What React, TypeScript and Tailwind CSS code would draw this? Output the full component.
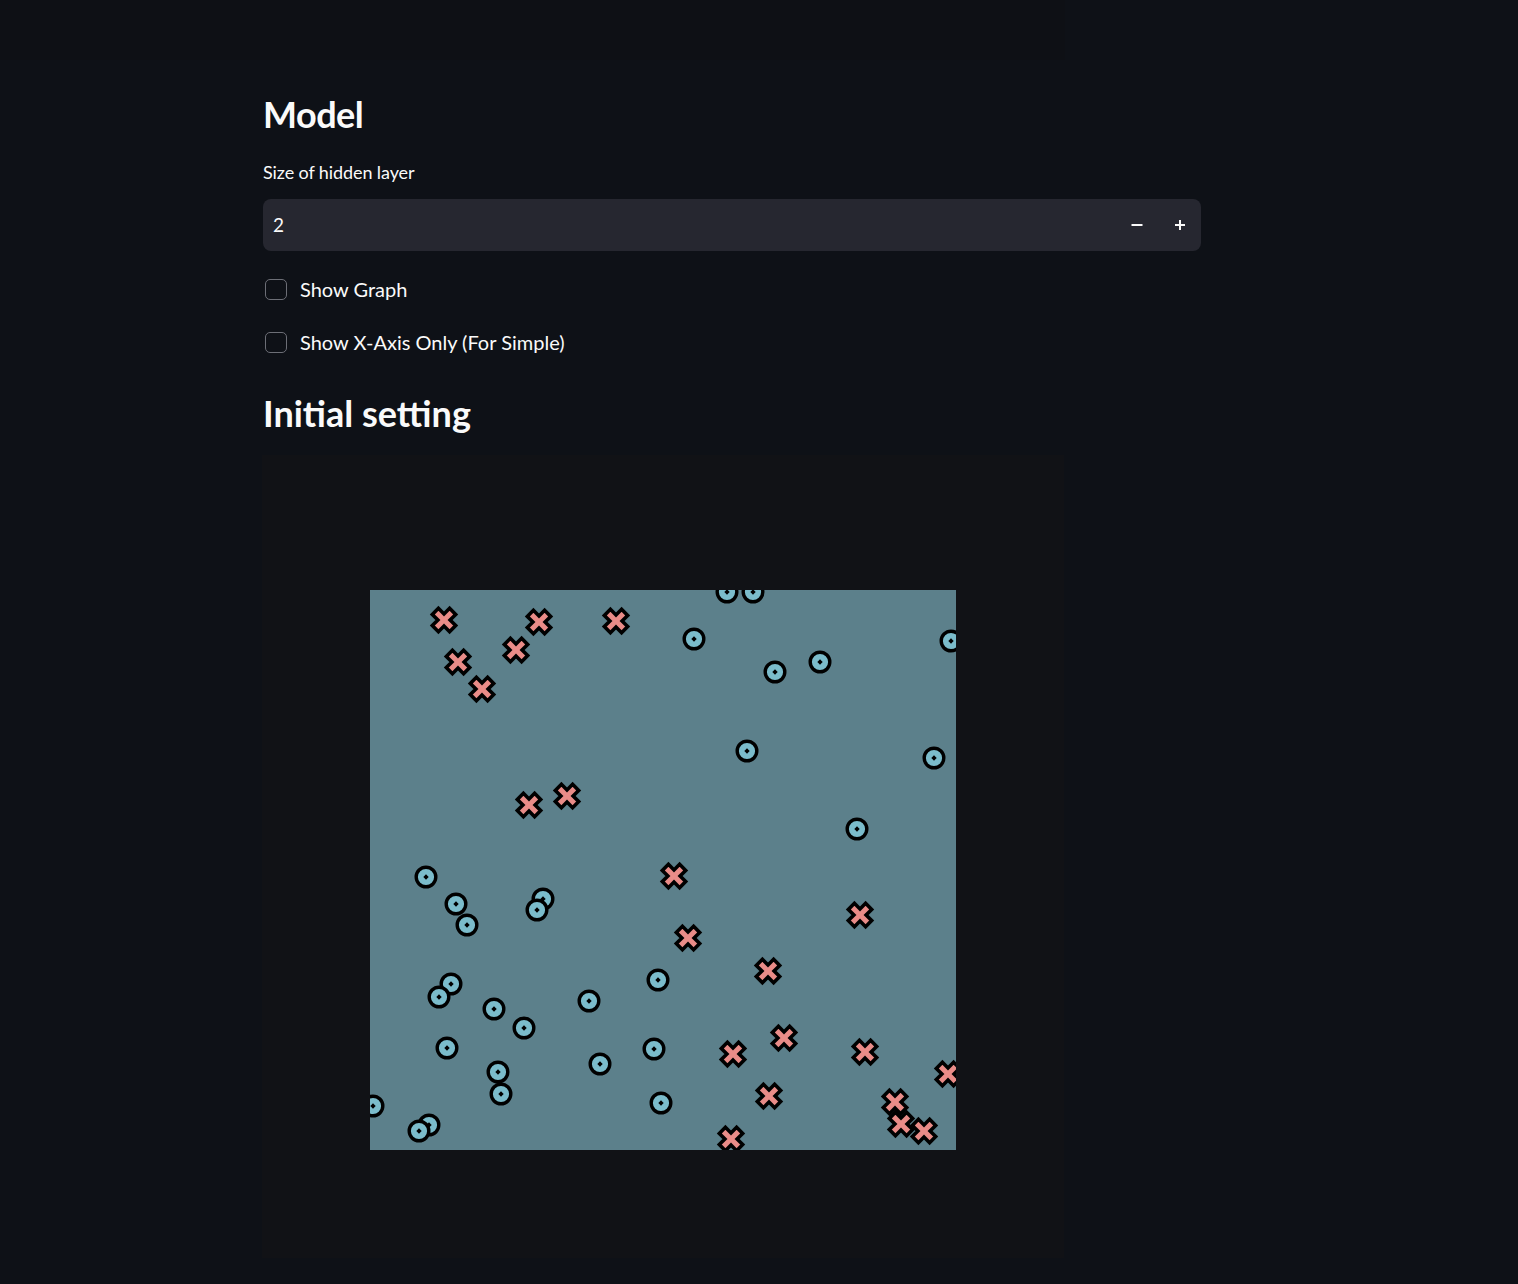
import React from "react";

const crosses: [number, number][] = [
  [74, 30], [169, 32], [246, 31], [146, 60], [88, 72], [112, 99],
  [159, 215], [197, 206], [304, 286], [318, 348], [490, 325], [398, 381],
  [414, 448], [363, 464], [495, 462], [578, 484], [399, 506], [525, 512],
  [531, 534], [554, 541], [361, 549],
];

const circles: [number, number][] = [
  [357, 2], [383, 2], [324, 49], [581, 51], [405, 82], [450, 72], [377, 161],
  [564, 168], [487, 239], [56, 287], [86, 314], [97, 335], [173, 309], [167, 320],
  [81, 394], [69, 407], [124, 419], [154, 438], [219, 411], [288, 390], [77, 458],
  [284, 459], [230, 474], [128, 482], [131, 504], [3, 516], [59, 535], [49, 541],
  [291, 513],
];

const a = 4.3;
const L = 12.2;
const crossPts = [
  [-a, -L], [a, -L], [a, -a], [L, -a], [L, a], [a, a], [a, L], [-a, L],
  [-a, a], [-L, a], [-L, -a], [-a, -a],
]
  .map((p) => p.join(","))
  .join(" ");

function Cross({ x, y }: { x: number; y: number }) {
  return (
    <g transform={`translate(${x} ${y}) rotate(45)`}>
      <polygon points={crossPts} fill="#e98c88" stroke="#000" strokeWidth={3.6} strokeLinejoin="miter" />
    </g>
  );
}

function Ring({ x, y }: { x: number; y: number }) {
  return (
    <g transform={`translate(${x} ${y})`}>
      <circle r={9.8} fill="#7bbccb" stroke="#000" strokeWidth={3.4} />
      <rect x={-1.9} y={-1.9} width={3.8} height={3.8} fill="#000" transform="rotate(45)" />
    </g>
  );
}

function Checkbox({ label }: { label: string }) {
  return (
    <label className="flex items-center h-[22px]">
      <span className="ml-[2px] w-[22px] h-[21px] rounded-[5px] border-[1.5px] border-[#6c6e76] box-border" />
      <span className="ml-[13px] text-[20px] leading-[22px] text-[#fafafa]">{label}</span>
    </label>
  );
}

export default function App() {
  return (
    <div
      className="min-h-[1284px] w-full bg-[#0e1117] text-[#fafafa]"
      style={{ fontFamily: '"Source Sans Pro", Lato, "Noto Sans", sans-serif' }}
    >
      <div className="w-[1065px] h-[60px] bg-[#0e1015]" />
      <div className="ml-[263px] w-[938px] flex flex-col">
        <h2 className="mt-[33px] text-[36px] leading-[43px] font-bold tracking-[-0.5px]">Model</h2>
        <div className="mt-[26px] text-[18px] leading-[20px] tracking-[-0.1px]">Size of hidden layer</div>
        <div className="mt-[17px] h-[52px] rounded-[8px] bg-[#262730] flex items-center">
          <span className="ml-[10px] text-[19px] flex-1">2</span>
          <svg width="12" height="12" viewBox="0 0 12 12" className="mr-[31px]">
            <rect x="0.5" y="5" width="11" height="2" fill="#fafafa" />
          </svg>
          <svg width="12" height="12" viewBox="0 0 12 12" className="mr-[15px]">
            <rect x="1" y="5" width="10" height="2" fill="#fafafa" />
            <rect x="5" y="1" width="2" height="10" fill="#fafafa" />
          </svg>
        </div>
        <div className="mt-[27px]">
          <Checkbox label="Show Graph" />
        </div>
        <div className="mt-[31px]">
          <Checkbox label="Show X-Axis Only (For Simple)" />
        </div>
        <h2 className="mt-[39px] text-[36px] leading-[43px] font-bold">Initial setting</h2>
        <div className="mt-[20px] -ml-[1px] w-[802px] h-[803px] bg-[#111216] pt-[135px] pl-[108px]">
          <svg width="586" height="560" viewBox="0 0 586 560" className="block overflow-hidden">
            <rect x="0" y="0" width="586" height="560" fill="#5c808b" />
            {circles.map(([x, y], i) => (
              <Ring key={"c" + i} x={x} y={y} />
            ))}
            {crosses.map(([x, y], i) => (
              <Cross key={"x" + i} x={x} y={y} />
            ))}
          </svg>
        </div>
      </div>
    </div>
  );
}
